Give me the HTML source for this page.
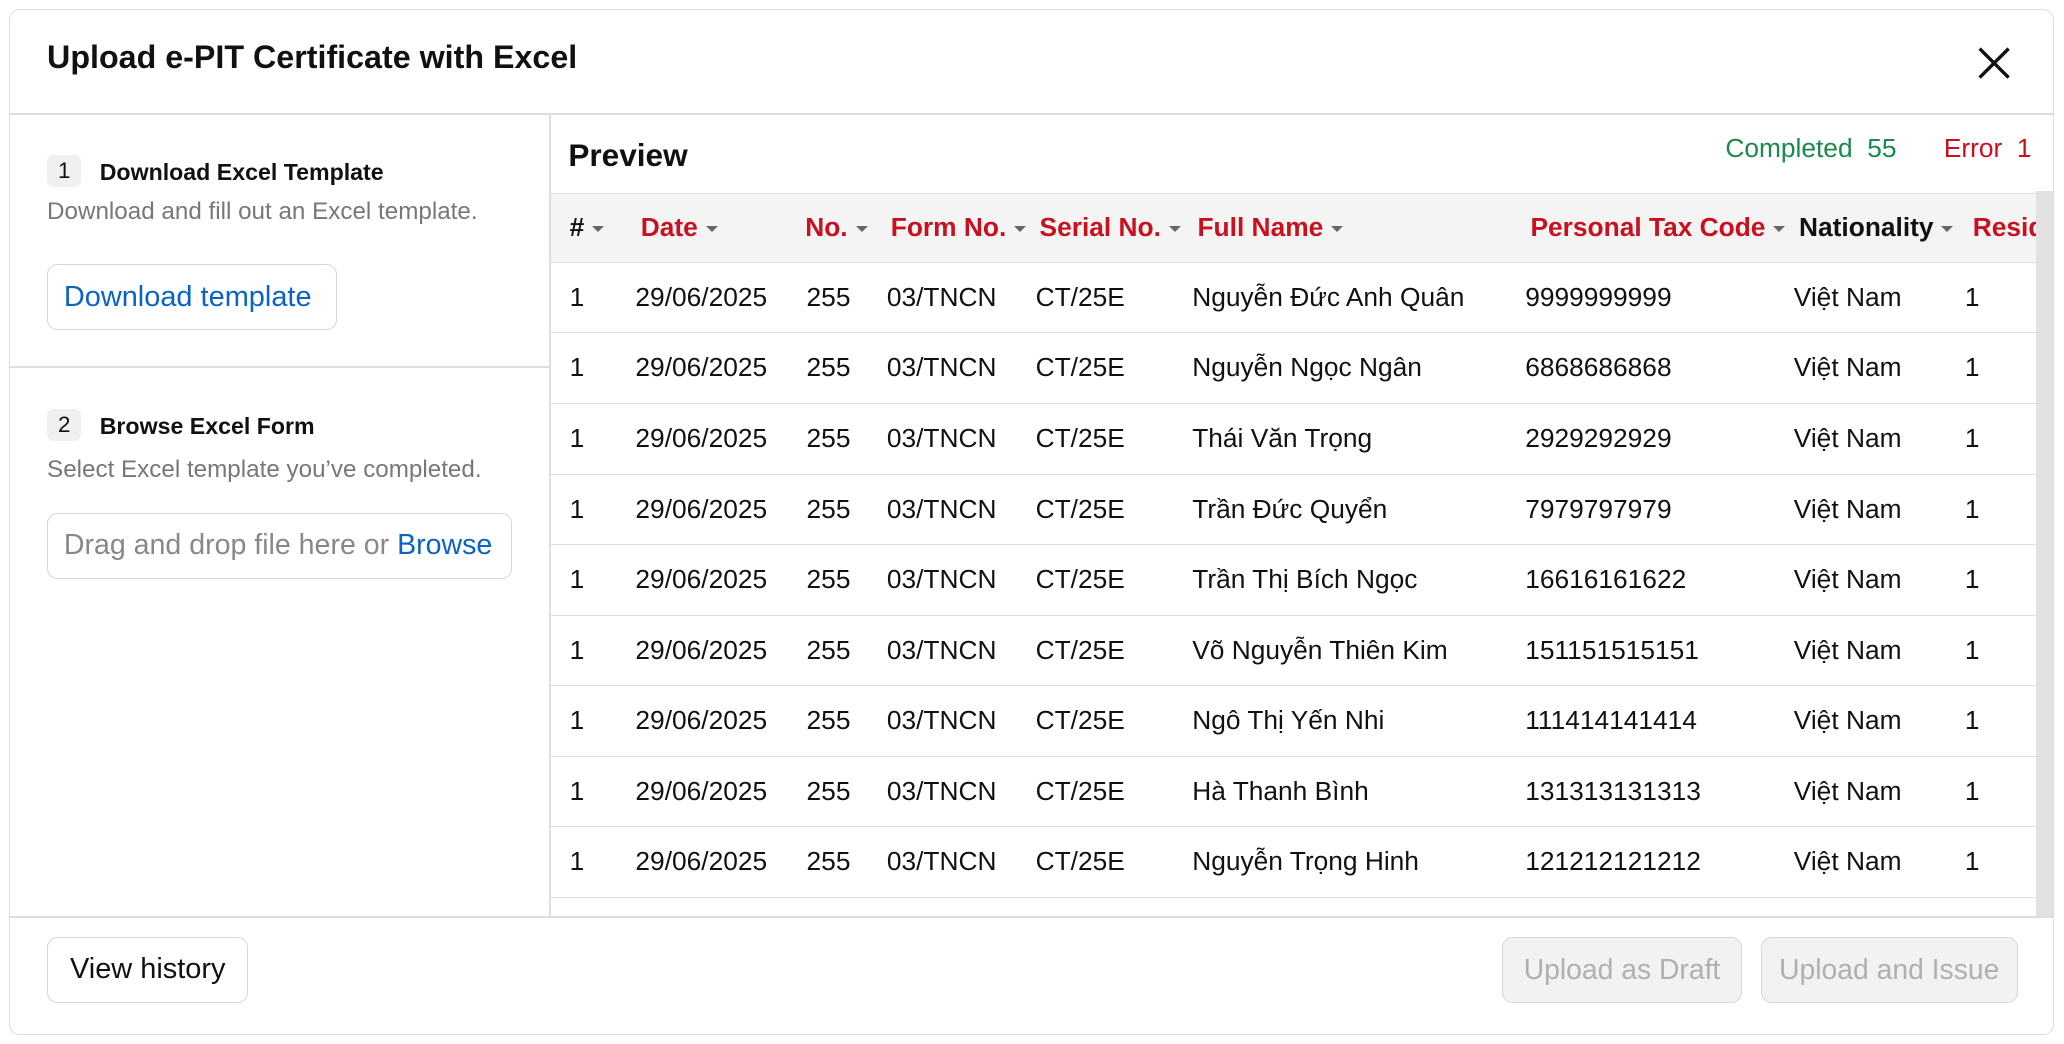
<!DOCTYPE html>
<html><head><meta charset="utf-8"><style>
html,body{margin:0;padding:0;background:#fff;width:2064px;height:1044px;overflow:hidden}
#w{zoom:1.3163;position:relative;width:1568px;height:793px;font-family:"Liberation Sans",sans-serif;color:#111}
.a{position:absolute;white-space:nowrap}
.modal{position:absolute;left:7px;top:7px;width:1552px;height:778px;border:1px solid #ddd;border-radius:8px;background:#fff;overflow:hidden}
.hl{position:absolute;background:#ddd}
.badge{position:absolute;width:26px;height:24px;background:#f0f0f0;border-radius:5px;font-size:17px;text-align:center;line-height:24px}
.btn{position:absolute;border:1.5px solid #d6d6d6;border-radius:8px;box-sizing:border-box;font-size:21.5px;display:flex;align-items:center;justify-content:center}
.dis{background:#f2f2f2;color:#b0b0b0}
.th{position:absolute;top:0;height:53px;line-height:53px;font-size:20px;font-weight:bold;color:#c8101e}
.th.k{color:#111}
.car{display:inline-block;width:0;height:0;border-left:5px solid transparent;border-right:5px solid transparent;border-top:5px solid #666;vertical-align:middle;margin-left:6px}
.row{position:absolute;left:0;width:1140px;height:53.6px;border-bottom:1.5px solid #ddd;box-sizing:border-box;font-size:20px}
.row span{position:absolute;top:0;line-height:52px;white-space:nowrap}
</style></head><body><div id="w">
<div class="modal">
 <div class="a" style="left:28px;top:22px;font-size:24.5px;font-weight:bold">Upload e-PIT Certificate with Excel</div>
 <svg class="a" style="left:1494px;top:27px" width="26" height="26" viewBox="0 0 26 26"><path d="M2 2L24 24M24 2L2 24" stroke="#111" stroke-width="2.6"/></svg>
 <div class="hl" style="left:0;top:78px;width:1552px;height:1.5px"></div>
 <div class="hl" style="left:409px;top:79px;width:1.5px;height:610px"></div>
 <div class="hl" style="left:0;top:270px;width:409px;height:1.5px"></div>
 <div class="hl" style="left:0;top:688px;width:1552px;height:1.5px"></div>

 <div class="badge" style="left:28px;top:110px">1</div>
 <div class="a" style="left:68px;top:113px;font-size:17.6px;font-weight:bold">Download Excel Template</div>
 <div class="a" style="left:28px;top:143px;font-size:18.4px;color:#777">Download and fill out an Excel template.</div>
 <div class="btn" style="left:28px;top:193px;width:220px;height:50px;color:#0b63c5;justify-content:flex-start;padding-left:12px;font-size:22px">Download template</div>

 <div class="badge" style="left:28px;top:303px">2</div>
 <div class="a" style="left:68px;top:306px;font-size:17.6px;font-weight:bold">Browse Excel Form</div>
 <div class="a" style="left:28px;top:339px;font-size:18.4px;color:#777">Select Excel template you’ve completed.</div>
 <div class="btn" style="left:28px;top:382px;width:353px;height:50px;color:#888;justify-content:flex-start;padding-left:12px;font-size:21.7px">Drag and drop file here or&nbsp;<span style="color:#0b63c5">Browse</span></div>

 <div class="a" style="left:424px;top:96px;font-size:24px;font-weight:bold">Preview</div>
 <div class="a" style="left:1303px;top:93px;font-size:20px;color:#1a8a4a">Completed&nbsp; 55</div>
 <div class="a" style="left:1469px;top:93px;font-size:20px;color:#c8101e">Error&nbsp; 1</div>

 <div class="a" style="left:411px;top:139px;width:1130px;height:550px;overflow:hidden">
  <div class="a" style="left:0;top:0;width:1140px;height:53px;background:#f4f4f4;border-top:1.5px solid #ddd;border-bottom:1.5px solid #ddd;box-sizing:border-box"></div>
  <div class="th k" style="left:14px">#<i class="car"></i></div>
  <div class="th" style="left:68px">Date<i class="car"></i></div>
  <div class="th" style="left:193px">No.<i class="car"></i></div>
  <div class="th" style="left:258px">Form No.<i class="car"></i></div>
  <div class="th" style="left:371px">Serial No.<i class="car"></i></div>
  <div class="th" style="left:491px">Full Name<i class="car"></i></div>
  <div class="th" style="left:744px">Personal Tax Code<i class="car"></i></div>
  <div class="th k" style="left:948px">Nationality<i class="car"></i></div>
  <div class="th" style="left:1080px">Residency</div>
  <div id="rows"></div>
 </div>
 <div class="a" style="left:1539px;top:137px;width:13px;height:551px;background:#e2e2e2"></div>

 <div class="btn" style="left:28px;top:704px;width:153px;height:50px;font-size:22px">View history</div>
 <div class="btn dis" style="left:1133px;top:704px;width:183px;height:50px">Upload as Draft</div>
 <div class="btn dis" style="left:1330px;top:704px;width:195px;height:50px">Upload and Issue</div>
</div>
</div>
<script>
var d=[["Nguyễn Đức Anh Quân","9999999999"],["Nguyễn Ngọc Ngân","6868686868"],["Thái Văn Trọng","2929292929"],["Trần Đức Quyển","7979797979"],["Trần Thị Bích Ngọc","16616161622"],["Võ Nguyễn Thiên Kim","151151515151"],["Ngô Thị Yến Nhi","111414141414"],["Hà Thanh Bình","131313131313"],["Nguyễn Trọng Hinh","121212121212"],["",""]];
var h="";d.forEach(function(r,i){var t=53+i*53.6;h+='<div class="row" style="top:'+t+'px">'+(r[0]?'<span style="left:14px">1</span><span style="left:64px">29/06/2025</span><span style="left:194px">255</span><span style="left:255px">03/TNCN</span><span style="left:368px">CT/25E</span><span style="left:487px">'+r[0]+'</span><span style="left:740px">'+r[1]+'</span><span style="left:944px">Việt Nam</span><span style="left:1074px">1</span>':'')+'</div>';});
document.getElementById("rows").innerHTML=h;
</script>
</body></html>
